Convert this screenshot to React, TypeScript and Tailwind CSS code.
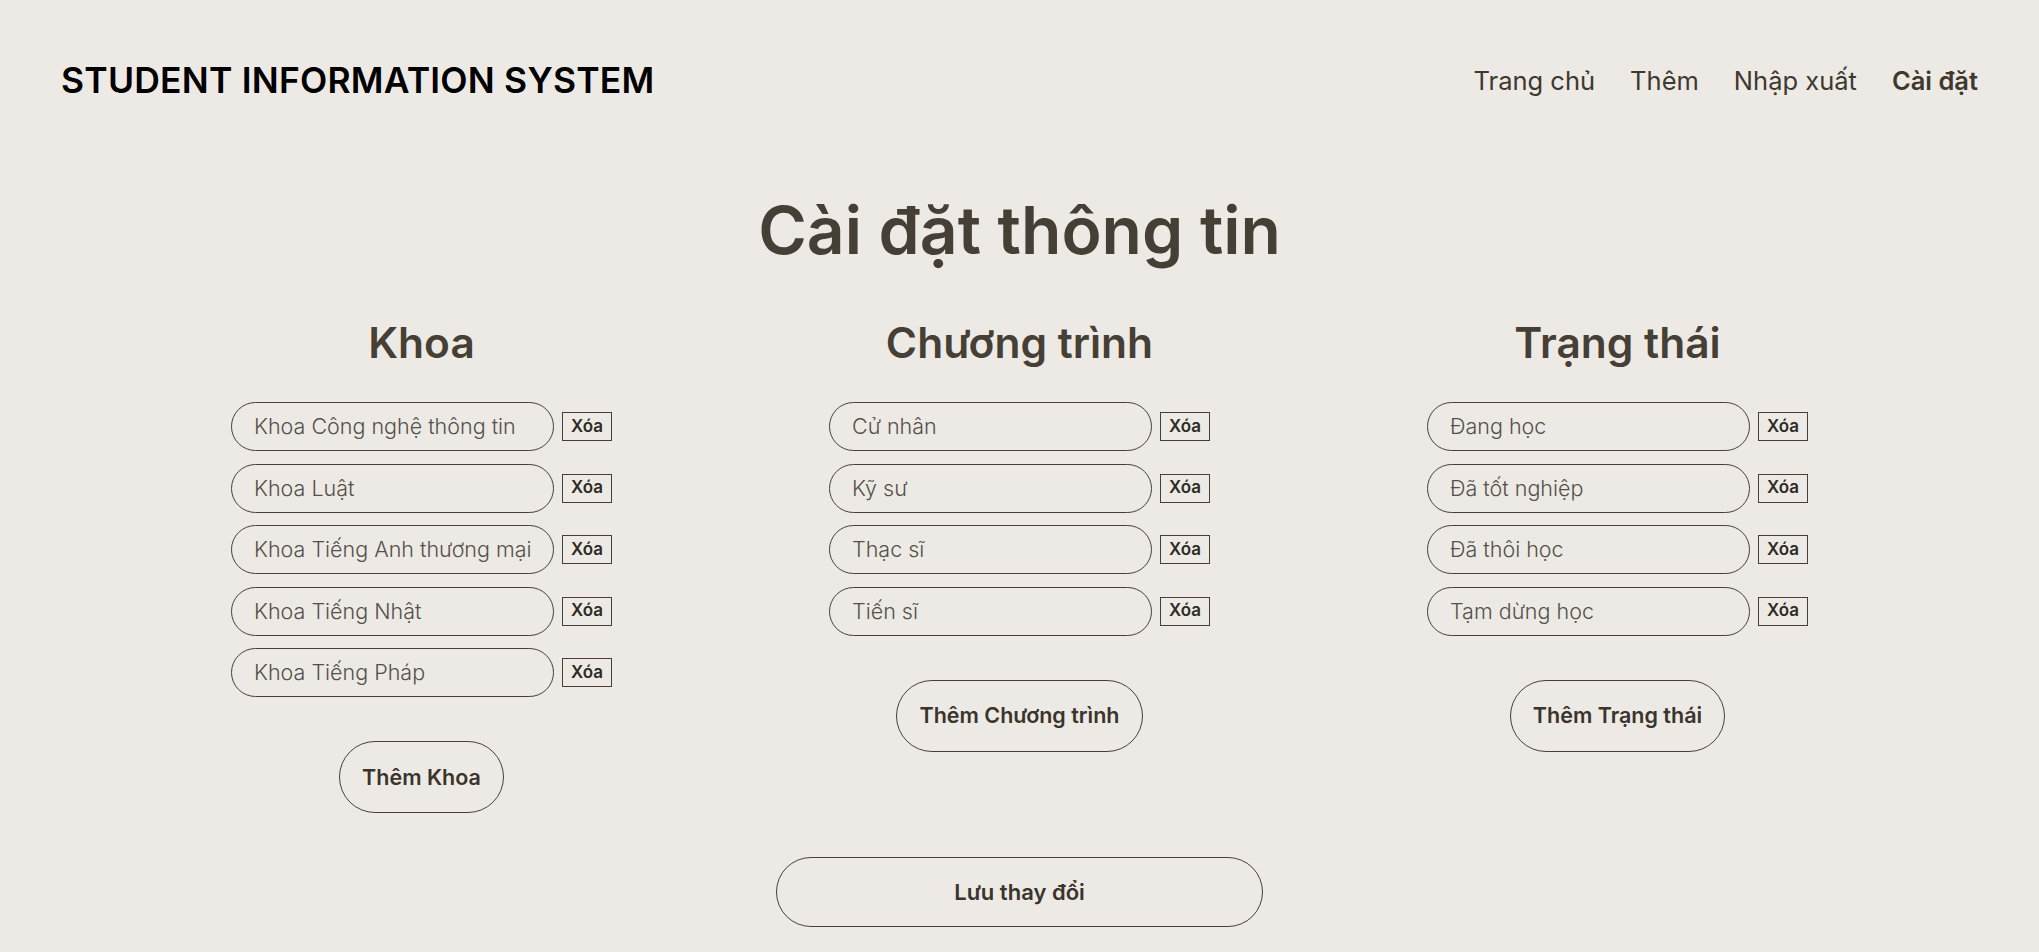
import React from "react";

const font = { fontFamily: "Inter, 'Noto Sans', sans-serif" };

function Column({ title, items, addLabel }: { title: string; items: string[]; addLabel: string }) {
  return (
    <div className="flex flex-col items-center">
      <h2 className="text-[42.5px] leading-[56px] font-semibold text-[#463f35]">{title}</h2>
      <div className="mt-[31px] flex flex-col gap-[12.5px]">
        {items.map((it) => (
          <div key={it} className="flex items-center gap-[8px]">
            <div className="w-[323px] h-[49px] rounded-full border border-[#463f35] flex items-center pl-[22px] text-[21.5px] font-light text-[#54504a]">
              {it}
            </div>
            <button className="w-[50px] h-[29px] border border-[#463f35] text-[17px] font-semibold text-[#2e2a25] flex items-center justify-center">
              Xóa
            </button>
          </div>
        ))}
      </div>
      <button className="mt-[44px] h-[72px] px-[22px] rounded-full border border-[#463f35] text-[21.5px] font-semibold text-[#3a342c]">
        {addLabel}
      </button>
    </div>
  );
}

export default function App() {
  return (
    <div className="min-h-[952px] bg-[#edeae5] text-[#463f35]" style={font}>
      <header className="h-[162px] flex items-center justify-between px-[61px]">
        <div className="text-[35.5px] font-semibold text-black tracking-[0.2px]">STUDENT INFORMATION SYSTEM</div>
        <nav className="flex items-center gap-[35px] text-[25.5px] text-[#3e382f]">
          <span>Trang chủ</span>
          <span>Thêm</span>
          <span>Nhập xuất</span>
          <span className="font-semibold">Cài đặt</span>
        </nav>
      </header>
      <h1 className="mt-[28px] text-center text-[66px] leading-[80px] font-semibold text-[#463f35]">Cài đặt thông tin</h1>
      <div className="mt-[45px] grid grid-cols-[598px_598px_598px] justify-center items-start">
        <Column title="Khoa" items={["Khoa Công nghệ thông tin", "Khoa Luật", "Khoa Tiếng Anh thương mại", "Khoa Tiếng Nhật", "Khoa Tiếng Pháp"]} addLabel="Thêm Khoa" />
        <Column title="Chương trình" items={["Cử nhân", "Kỹ sư", "Thạc sĩ", "Tiến sĩ"]} addLabel="Thêm Chương trình" />
        <Column title="Trạng thái" items={["Đang học", "Đã tốt nghiệp", "Đã thôi học", "Tạm dừng học"]} addLabel="Thêm Trạng thái" />
      </div>
      <div className="mt-[44px] flex justify-center">
        <button className="w-[487px] h-[70px] rounded-full border border-[#463f35] text-[22px] font-semibold text-[#3a342c]">
          Lưu thay đổi
        </button>
      </div>
    </div>
  );
}
